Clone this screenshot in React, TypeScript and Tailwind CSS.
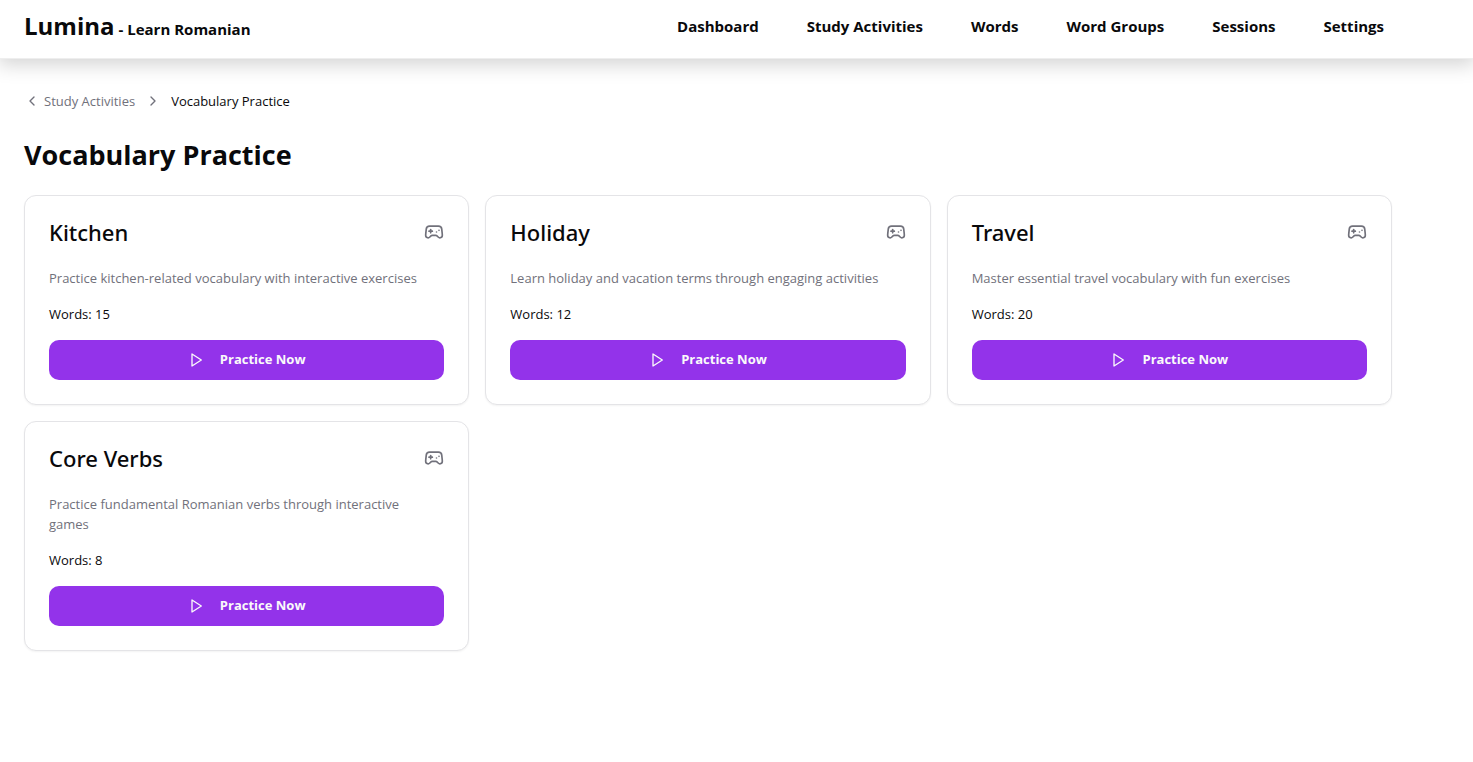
import { ChevronLeft, ChevronRight, Gamepad2 } from 'lucide-react';

const links = ['Dashboard', 'Study Activities', 'Words', 'Word Groups', 'Sessions', 'Settings'];

const activities = [
  { title: 'Kitchen', description: 'Practice kitchen-related vocabulary with interactive exercises', words: 15 },
  { title: 'Holiday', description: 'Learn holiday and vacation terms through engaging activities', words: 12 },
  { title: 'Travel', description: 'Master essential travel vocabulary with fun exercises', words: 20 },
  { title: 'Core Verbs', description: 'Practice fundamental Romanian verbs through interactive games', words: 8 },
];

type Activity = (typeof activities)[number];

function PlayIcon() {
  return (
    <svg
      aria-hidden="true"
      viewBox="0 0 24 24"
      className="size-4"
      fill="none"
      stroke="currentColor"
      strokeWidth="2"
      strokeLinecap="round"
      strokeLinejoin="round"
    >
      <polygon points="6 3 20 12 6 21 6 3" />
    </svg>
  );
}

function Header() {
  return (
    <header className="border-b border-[#eeeeee] bg-white px-2 shadow-[0_4px_18px_2px_rgba(0,0,0,0.17)]">
      <div className="flex max-w-[1400px] items-center justify-between px-4 pt-[5px] pb-[11px]">
        <a href="#" className="flex items-baseline gap-1 font-bold whitespace-nowrap">
          <span className="text-[24px] leading-[42px]">Lumina</span>
          <span className="text-[15px]">- Learn Romanian</span>
        </a>
        <nav className="flex gap-12 pr-2">
          {links.map((link) => (
            <a key={link} href="#" className="text-[15px] leading-6 font-bold whitespace-nowrap">
              {link}
            </a>
          ))}
        </nav>
      </div>
    </header>
  );
}

function ActivityCard({ title, description, words }: Activity) {
  return (
    <article className="rounded-xl border border-zinc-200 bg-white p-6 shadow-[0_1px_2px_rgba(0,0,0,0.05)]">
      <div className="mb-6 flex items-center justify-between">
        <h2 className="font-['Noto_Sans',sans-serif] text-[22px] leading-6 font-medium">{title}</h2>
        <Gamepad2 className="size-5 text-zinc-500" />
      </div>
      <p className="pr-2 text-[13px] leading-5 text-zinc-500">{description}</p>
      <p className="mt-4 text-[13px] leading-5">Words: {words}</p>
      <button
        type="button"
        className="mt-4 flex h-10 w-full items-center justify-center gap-4 rounded-[10px] bg-[#9333ea] text-[13px] font-bold text-zinc-50"
      >
        <PlayIcon />
        Practice Now
      </button>
    </article>
  );
}

export default function App() {
  return (
    <div className="min-h-screen overflow-x-hidden bg-white font-['Open_Sans',sans-serif] text-zinc-950">
      <Header />
      <main className="px-2">
        <div className="max-w-[1400px] px-4 py-8">
          <nav aria-label="Breadcrumb" className="flex items-center text-[13px] leading-5">
            <a href="#" className="flex items-center gap-1 text-zinc-500">
              <ChevronLeft className="size-4" />
              Study Activities
            </a>
            <ChevronRight className="mx-[10px] size-4 text-zinc-500" />
            <span>Vocabulary Practice</span>
          </nav>
          <h1 className="mt-6 mb-5 text-[27px] leading-10 font-bold">Vocabulary Practice</h1>
          <div className="grid grid-cols-1 gap-4 md:grid-cols-2 lg:grid-cols-3">
            {activities.map((activity) => (
              <ActivityCard key={activity.title} {...activity} />
            ))}
          </div>
        </div>
      </main>
    </div>
  );
}
